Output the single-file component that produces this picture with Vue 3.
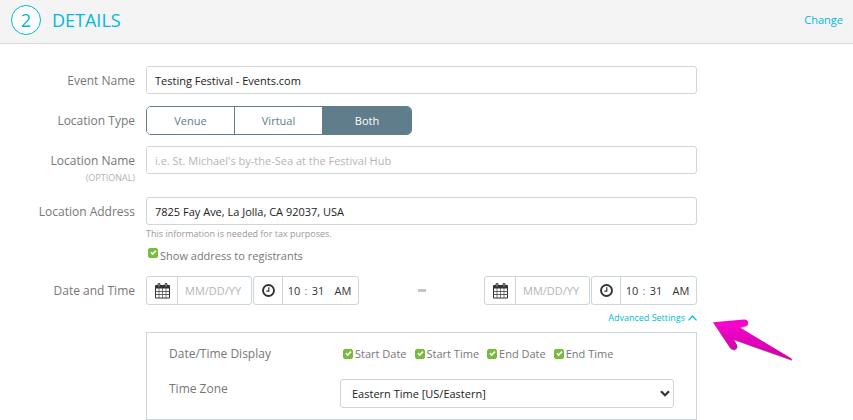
<script setup>
import { ref } from 'vue'

const eventName = ref('Testing Festival - Events.com')
const locationTypes = ['Venue', 'Virtual', 'Both']
const locationType = ref('Both')
const locationName = ref('')
const address = ref('7825 Fay Ave, La Jolla, CA 92037, USA')
const showAddress = ref(true)
const advancedOpen = ref(true)
const timeZone = ref('US/Eastern')

const moments = ref([
  { id: 'start', date: '', hour: '10', minute: '31', half: 'AM' },
  { id: 'end', date: '', hour: '10', minute: '31', half: 'AM' }
])

const displayOptions = ref([
  { id: 'start-date', label: 'Start Date', checked: true },
  { id: 'start-time', label: 'Start Time', checked: true },
  { id: 'end-date', label: 'End Date', checked: true },
  { id: 'end-time', label: 'End Time', checked: true }
])
</script>

<template>
  <section class="details">
    <header class="bar">
      <span class="step">2</span>
      <h1 class="title">DETAILS</h1>
      <a href="#" class="change">Change</a>
    </header>

    <form class="form" @submit.prevent>
      <div class="row">
        <label class="label" for="event-name">Event Name</label>
        <input id="event-name" v-model="eventName" class="text" type="text">
      </div>

      <div class="row">
        <span id="type-label" class="label">Location Type</span>
        <div class="segments" role="group" aria-labelledby="type-label">
          <button
            v-for="type in locationTypes"
            :key="type"
            type="button"
            class="segment"
            :class="{ active: type === locationType }"
            @click="locationType = type"
          >{{ type }}</button>
        </div>
      </div>

      <div class="row">
        <label class="label" for="location-name">
          Location Name
          <small class="optional">(OPTIONAL)</small>
        </label>
        <input
          id="location-name"
          v-model="locationName"
          class="text"
          type="text"
          placeholder="i.e. St. Michael's by-the-Sea at the Festival Hub"
        >
      </div>

      <div class="row">
        <label class="label" for="address">Location Address</label>
        <div class="stack">
          <input id="address" v-model="address" class="text" type="text">
          <p class="hint">This information is needed for tax purposes.</p>
          <label class="check check-address">
            <input v-model="showAddress" type="checkbox">
            <span>Show address to registrants</span>
          </label>
        </div>
      </div>

      <div class="row">
        <span class="label">Date and Time</span>
        <div class="stack">
          <div class="dates">
            <template v-for="(moment, i) in moments" :key="moment.id">
              <span v-if="i > 0" class="dash"></span>
              <div class="moment">
                <div class="group">
                  <label class="addon" :for="moment.id + '-date'" :aria-label="moment.id + ' date'">
                    <svg width="15" height="16" viewBox="0 0 15 16">
                      <path fill="#333" d="M1 2h1.500V1.500q0-1.500 1.500-1.500t1.500 1.500V2h4V1.500q0-1.500 1.500-1.500t1.500 1.500V2H14q1 0 1 1v11.500q0 1-1 1H1q-1 0-1-1V3q0-1 1-1z" />
                      <path fill="#fff" d="M1 5.500h2.700v2.500H1zM4.300 5.500h2.900v2.500H4.300zM7.800 5.500h2.900v2.500H7.800zM11.300 5.500H14v2.500h-2.700zM1 8.700h2.700v2.500H1zM4.300 8.700h2.900v2.500H4.300zM7.800 8.700h2.900v2.500H7.800zM11.300 8.700H14v2.500h-2.700zM1 11.900h2.700v2.500H1zM4.300 11.900h2.900v2.500H4.300zM7.800 11.900h2.900v2.500H7.800zM11.300 11.900H14v2.500h-2.700z" />
                      <path stroke="#ccc" stroke-width=".8" d="M4 1v2.500M11 1v2.500" />
                    </svg>
                  </label>
                  <input :id="moment.id + '-date'" v-model="moment.date" class="date" type="text" placeholder="MM/DD/YY">
                </div>
                <div class="group">
                  <label class="addon addon-time" :for="moment.id + '-hour'" :aria-label="moment.id + ' time'">
                    <svg width="13" height="13" viewBox="0 0 13 13" fill="none" stroke="#333">
                      <circle cx="6.500" cy="6.500" r="5.500" stroke-width="1.900" />
                      <path stroke-width="1.200" d="M6.800 3.200v3.900H4.300" />
                    </svg>
                  </label>
                  <div class="time">
                    <input :id="moment.id + '-hour'" v-model="moment.hour" class="digits" type="text">
                    <span class="colon">:</span>
                    <input v-model="moment.minute" class="digits" type="text" aria-label="Minute">
                    <input v-model="moment.half" class="half" type="text" aria-label="AM or PM">
                  </div>
                </div>
              </div>
            </template>
          </div>

          <button type="button" class="advanced" @click="advancedOpen = !advancedOpen">
            Advanced Settings
            <svg width="9" height="6" viewBox="0 0 9 6" fill="none" stroke="currentColor" stroke-width="1.200">
              <path d="M.5 5.300l4-4.300 4 4.300" />
            </svg>
          </button>

          <div v-if="advancedOpen" class="panel">
            <svg class="pointer" width="82" height="44" viewBox="0 0 82 44">
              <defs>
                <linearGradient id="pink" x1="0.300" y1="1" x2="0.500" y2="0">
                  <stop offset="0.300" stop-color="#d800b0" />
                  <stop offset="0.800" stop-color="#f505cc" />
                </linearGradient>
              </defs>
              <g id="arrow">
                <path fill="#555" opacity=".5" transform="translate(.4 .8)" d="M1 3.300L32 .6Q36 .6 36 4 36 6.800 32.500 7.200L28 8.600 79.500 39.500Q80.300 41.200 78.500 40.800L22 20.800 25 26Q26 29.500 22.500 30.700 19.800 31.200 18 28.800z" />
                <path fill="url(#pink)" d="M1 3.300L32 .6Q36 .6 36 4 36 6.800 32.500 7.200L28 8.600 79.500 39.500Q80.300 41.200 78.500 40.800L22 20.800 25 26Q26 29.500 22.500 30.700 19.800 31.200 18 28.800z" />
              </g>
            </svg>
            <div class="panel-row">
              <span id="display-label" class="panel-label">Date/Time Display</span>
              <div class="checks" role="group" aria-labelledby="display-label">
                <label v-for="option in displayOptions" :key="option.id" class="check">
                  <input v-model="option.checked" type="checkbox">
                  <span>{{ option.label }}</span>
                </label>
              </div>
            </div>
            <div class="panel-row">
              <label class="panel-label" for="zone">Time Zone</label>
              <div class="select-wrap">
                <select id="zone" v-model="timeZone" class="select">
                  <option value="US/Eastern">Eastern Time [US/Eastern]</option>
                  <option value="US/Central">Central Time [US/Central]</option>
                  <option value="US/Pacific">Pacific Time [US/Pacific]</option>
                </select>
                <svg class="chevron" width="10" height="7" viewBox="0 0 10 7" fill="none" stroke="#333" stroke-width="2.200">
                  <path d="M1 1.200l4 4 4-4" />
                </svg>
              </div>
            </div>
          </div>
        </div>
      </div>
    </form>
  </section>
</template>

<style>
body {
  background: #fff;
}
</style>

<style scoped>
.details,
.details input,
.details button,
.details select {
  font-family: "Open Sans", "Noto Sans", sans-serif;
  font-size: 11px;
  box-sizing: border-box;
}

.details {
  color: #777;
}

.bar {
  display: flex;
  align-items: center;
  box-sizing: border-box;
  height: 44px;
  padding: 0 10px 4px 11px;
  background: #f4f4f4;
  border-bottom: 1px solid #d9dcdc;
  color: #00b9d9;
}

.step {
  box-sizing: border-box;
  width: 30px;
  height: 30px;
  border: 1px solid #00b9d9;
  border-radius: 50%;
  background: #fff;
  font-size: 18px;
  line-height: 28px;
  text-align: center;
}

.title {
  margin: 0 auto 0 11px;
  font-size: 18px;
  font-weight: 400;
  line-height: 24px;
}

.change {
  color: inherit;
  text-decoration: none;
}

.form {
  display: flex;
  flex-direction: column;
  gap: 11px;
  padding: 22px 156px 0 0;
}

.row {
  display: grid;
  grid-template-columns: 135px minmax(0, 1fr);
  column-gap: 11px;
  align-items: start;
}

.label {
  padding-top: 6px;
  font-size: 12px;
  line-height: 18px;
  text-align: right;
}

.optional {
  display: block;
  color: #b2b2b2;
  font-size: 9px;
  line-height: 16px;
}

.stack {
  display: flex;
  flex-direction: column;
}

.text {
  width: 100%;
  height: 28px;
  margin: 0 0 1px;
  padding: 0 8px;
  border: 1px solid #cdd6da;
  border-radius: 3px;
  color: #222;
}

input::placeholder {
  color: #b5b5b5;
  opacity: 1;
}

input:focus,
select:focus {
  outline: none;
  border-color: #00b9d9;
}

.segments {
  display: grid;
  grid-template-columns: 87px 88px 1fr;
  box-sizing: border-box;
  width: 266px;
  height: 29px;
  overflow: hidden;
  border: 1px solid #607d8b;
  border-radius: 5px;
}

.segment {
  padding: 0 0 1px;
  border: 0;
  background: #fff;
  color: #607d8b;
}

.segment + .segment {
  border-left: 1px solid #607d8b;
}

.segment.active {
  background: #607d8b;
  color: #fff;
}

.hint {
  margin: 0;
  color: #999;
  font-size: 9px;
  line-height: 16px;
}

.check {
  display: flex;
  align-items: center;
  gap: 2px;
  line-height: 16px;
}

.check-address {
  align-items: flex-start;
  margin: 6px 0 1px 2px;
}

.check input {
  appearance: none;
  width: 10px;
  height: 10px;
  margin: 0;
  border: 1px solid #76bd3d;
  border-radius: 2px;
}

.check input:checked {
  background: #76bd3d;
}

.check input:checked::before {
  content: "";
  display: block;
  width: 5px;
  height: 2px;
  margin: 1px;
  border: solid #fff;
  border-width: 0 0 2px 2px;
  box-sizing: content-box;
  transform: rotate(-45deg) scale(0.8);
}

.dates {
  display: flex;
  align-items: center;
  justify-content: space-between;
}

.moment {
  display: flex;
  gap: 1px;
}

.group {
  display: flex;
  box-sizing: border-box;
  height: 29px;
  border: 1px solid #cdd6da;
  border-radius: 3px;
}

.addon {
  display: flex;
  align-items: center;
  justify-content: center;
  width: 30px;
  border-right: 1px solid #cdd6da;
}

.addon-time {
  width: 28px;
}

.date {
  width: 73px;
  padding: 0 7px;
  border: 0;
  background: none;
}

.time {
  display: flex;
  align-items: center;
  width: 75px;
  padding: 0 6px 0 4px;
  box-sizing: border-box;
}

.digits,
.half {
  width: 14px;
  padding: 0;
  border: 0;
  background: none;
  color: #333;
  text-align: center;
}

.colon {
  width: 10px;
  text-align: center;
}

.half {
  width: 18px;
  margin-left: auto;
}

.dash {
  width: 8px;
  height: 3px;
  background: #c4c4c4;
}

.advanced {
  display: flex;
  align-items: center;
  gap: 3px;
  align-self: flex-end;
  height: 27px;
  padding: 0 0 2px;
  border: 0;
  background: none;
  color: #00b9d9;
}

.details .advanced {
  font-size: 9px;
}

.panel {
  position: relative;
  display: flex;
  flex-direction: column;
  gap: 15px;
  padding: 11px 22px;
  border: 1px solid #cdd6da;
}

.panel-row {
  display: grid;
  grid-template-columns: 171px minmax(0, 1fr);
}

.panel-label {
  font-size: 12px;
  line-height: 20px;
}

.checks {
  display: flex;
  gap: 8px;
  padding: 2px 3px;
}

.select-wrap {
  position: relative;
}

.select {
  appearance: none;
  display: block;
  width: 100%;
  height: 29px;
  padding: 0 24px 0 11px;
  border: 1px solid #cdd6da;
  border-radius: 3px;
  background: #fff;
  color: #222;
}

.chevron {
  position: absolute;
  top: 11px;
  right: 4px;
  pointer-events: none;
}

.pointer {
  position: absolute;
  top: -14px;
  left: calc(100% + 16px);
}
</style>
